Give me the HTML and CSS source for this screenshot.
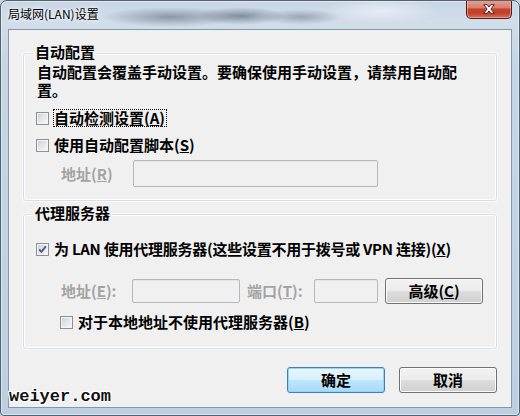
FILE: index.html
```html
<!DOCTYPE html>
<html lang="zh-CN">
<head>
<meta charset="utf-8">
<title>局域网(LAN)设置</title>
<link rel="stylesheet" href="styles.css">
</head>
<body>
<div class="window">
  <div class="titlebar">
    <span class="title">局域网(LAN)设置</span>
    <div class="close">
      <svg width="46" height="18" viewBox="0 0 46 18">
        <path d="M17.5 4.5 L21 4.5 L23 7 L25 4.5 L28.5 4.5 L25 9 L28.5 13.5 L25 13.5 L23 11 L21 13.5 L17.5 13.5 L21 9 Z" fill="#ffffff" stroke="#4a1a12" stroke-width="1" stroke-linejoin="round"/>
      </svg>
    </div>
  </div>
  <div class="client">
    <section class="group">
      <div class="group-title">自动配置</div>
      <p class="desc">自动配置会覆盖手动设置。要确保使用手动设置，请禁用自动配置。</p>
      <div class="check-row">
        <span class="cb"></span>
        <span class="label focus">自动检测设置(<u>A</u>)</span>
      </div>
      <div class="check-row">
        <span class="cb"></span>
        <span class="label">使用自动配置脚本(<u>S</u>)</span>
      </div>
      <div class="field-row script-row">
        <span class="field-label w72">地址(<u>R</u>)</span>
        <span class="input w245"></span>
      </div>
    </section>

    <section class="group proxy">
      <div class="group-title">代理服务器</div>
      <div class="check-row lan-row">
        <span class="cb checked">
          <svg width="13" height="13" viewBox="0 0 13 13"><path d="M3.2 6.4 L5.4 8.8 L9.8 3.4" fill="none" stroke="#3d5c99" stroke-width="1.9"/></svg>
        </span>
        <span class="label tight">为 LAN 使用代理服务器(这些设置不用于拨号或 VPN 连接)(<u>X</u>)</span>
      </div>
      <div class="field-row proxy-row">
        <span class="field-label w71">地址(<u>E</u>):</span>
        <span class="input w108"></span>
        <span class="field-label w67 gap7">端口(<u>T</u>):</span>
        <span class="input w64"></span>
        <span class="btn advanced">高级(<u>C</u>)</span>
      </div>
      <div class="check-row bypass-row">
        <span class="cb"></span>
        <span class="label">对于本地地址不使用代理服务器(<u>B</u>)</span>
      </div>
    </section>

    <div class="actions">
      <span class="btn default">确定</span>
      <span class="btn">取消</span>
    </div>
  </div>
  <div class="watermark">weiyer.com</div>
</div>
</body>
</html>
```
FILE: styles.css
```css
* { box-sizing: border-box; }

html, body {
  margin: 0;
  padding: 0;
  width: 520px;
  height: 416px;
  overflow: hidden;
  background: #c4d4e4;
}

body {
  font-family: "Noto Sans CJK SC", "Noto Sans", sans-serif;
}

.window {
  position: relative;
  width: 520px;
  height: 416px;
  border: 1px solid #55616e;
  border-radius: 7px 7px 4px 4px;
  display: flex;
  flex-direction: column;
  overflow: hidden;
  background:
    radial-gradient(ellipse 70px 10px at 170px 16px, rgba(110,122,136,0.7), rgba(110,122,136,0) 100%),
    radial-gradient(ellipse 45px 9px at 240px 15px, rgba(95,108,122,0.7), rgba(95,108,122,0) 100%),
    radial-gradient(ellipse 40px 8px at 300px 16px, rgba(110,122,136,0.55), rgba(110,122,136,0) 100%),
    radial-gradient(ellipse 60px 12px at 380px 10px, rgba(235,242,250,0.8), rgba(235,242,250,0) 100%),
    linear-gradient(to bottom, #c8d6e4 0px, #d1dde9 20px, #c6d6e6 60px, #bccfe2 100%);
  box-shadow: inset 0 0 0 1px rgba(255,255,255,0.45);
}

.titlebar {
  height: 28px;
  flex: none;
  display: flex;
  justify-content: space-between;
  align-items: flex-start;
  padding-left: 7px;
  padding-right: 7px;
}

.title {
  padding-top: 5px;
  font-size: 12px;
  line-height: 16px;
  color: #000;
  text-shadow: 0 0 6px rgba(255,255,255,0.9), 0 0 3px rgba(255,255,255,0.9);
}

.close {
  width: 46px;
  height: 19px;
  margin-top: -1px;
  border: 1px solid #4e1f17;
  border-top: none;
  border-radius: 0 0 5px 5px;
  background: linear-gradient(to bottom, #e6a294 0%, #d9806f 42%, #c4452f 50%, #c13f29 72%, #d6705a 100%);
  box-shadow: inset 0 0 0 1px rgba(255,220,210,0.45);
  display: flex;
  align-items: center;
  justify-content: center;
}

.client {
  flex: 1;
  margin: 0 7px 7px 7px;
  background: #f0f0f0;
  border: 1px solid #8797aa;
  padding-top: 23px;
  font-size: 15px;
  font-weight: 700;
  color: #000;
}

.group {
  margin: 0 14px;
  border: 1px solid #d5dfe5;
  border-radius: 3px;
  box-shadow: inset 0 0 0 1px #ffffff, 0 0 0 1px rgba(255,255,255,0.6);
  padding: 0 12px 13px 12px;
}

.group.proxy {
  margin-top: 13px;
  padding-bottom: 16px;
}

.group-title {
  width: fit-content;
  margin: -10px 0 0 -3px;
  padding: 0 2px;
  background: #f0f0f0;
  font-size: 15px;
  line-height: 16px;
}

.desc {
  margin: 3px 0 0 1px;
  width: 428px;
  line-height: 18px;
}

.check-row {
  display: flex;
  align-items: center;
  gap: 4px;
  height: 20px;
  margin-top: 7px;
}

.group > .desc + .check-row { margin-top: 9px; }
.check-row.lan-row { margin-top: 18px; }
.check-row.bypass-row { margin-top: 8px; padding-left: 24px; }

.cb {
  width: 13px;
  height: 13px;
  flex: none;
  border: 1px solid #8e8f8f;
  background: linear-gradient(135deg, #c9cdd3 0%, #e4e6ea 50%, #f8f8f8 100%);
  box-shadow: inset 0 0 0 1px #f4f4f4;
}

.cb svg {
  display: block;
  margin: -1px;
}

.label {
  line-height: 16px;
  border: 1px solid transparent;
  padding-right: 1px;
  white-space: nowrap;
}

.label.tight {
  letter-spacing: -0.25px;
}

.label.focus {
  border: 1px dotted #000;
}

.field-row {
  display: flex;
  align-items: center;
  padding-left: 25px;
}

.script-row {
  margin-top: 5px;
  height: 27px;
}

.proxy-row {
  margin-top: 19px;
  height: 26px;
}

.field-label {
  color: #a3a3a3;
  line-height: 18px;
  flex: none;
}

.w72 { width: 72px; }
.w71 { width: 71px; }
.w67 { width: 67px; }
.gap7 { margin-left: 7px; }

.input {
  display: block;
  flex: none;
  border: 1px solid #b5b8bc;
  border-radius: 2px;
  background: #f0f0f0;
  box-shadow: inset 0 1px 0 #e6e6e6;
}

.w245 { width: 245px; height: 27px; }
.w108 { width: 108px; height: 24px; }
.w64 { width: 64px; height: 24px; }

.btn {
  display: flex;
  align-items: center;
  justify-content: center;
  width: 98px;
  height: 26px;
  border: 1px solid #707070;
  border-radius: 3px;
  background: linear-gradient(to bottom, #f2f2f2 0%, #ebebeb 48%, #dddddd 52%, #cfcfcf 100%);
  box-shadow: inset 0 0 0 1px #fbfbfb;
  font-size: 15px;
  line-height: 18px;
  flex: none;
}

.btn.advanced {
  margin-left: 7px;
  color: #000;
}

.btn.default {
  border-color: #3c7fb1;
  background: linear-gradient(to bottom, #eaf6fd 0%, #d9f0fc 48%, #bee6fd 52%, #a7d9f5 100%);
  box-shadow: inset 0 0 0 1px #8fd6f7;
}

.actions {
  display: flex;
  justify-content: flex-end;
  gap: 14px;
  margin: 18px 14px 0 0;
}

.watermark {
  position: absolute;
  left: 8px;
  top: 386px;
  font-family: "Liberation Mono", monospace;
  font-weight: 700;
  font-size: 17px;
  line-height: 20px;
  color: #111;
  text-shadow: 1px 0 0 #fff, -1px 0 0 #fff, 0 1px 0 #fff, 0 -1px 0 #fff, 1px 1px 0 #fff, -1px -1px 0 #fff, 1px -1px 0 #fff, -1px 1px 0 #fff;
}
```
